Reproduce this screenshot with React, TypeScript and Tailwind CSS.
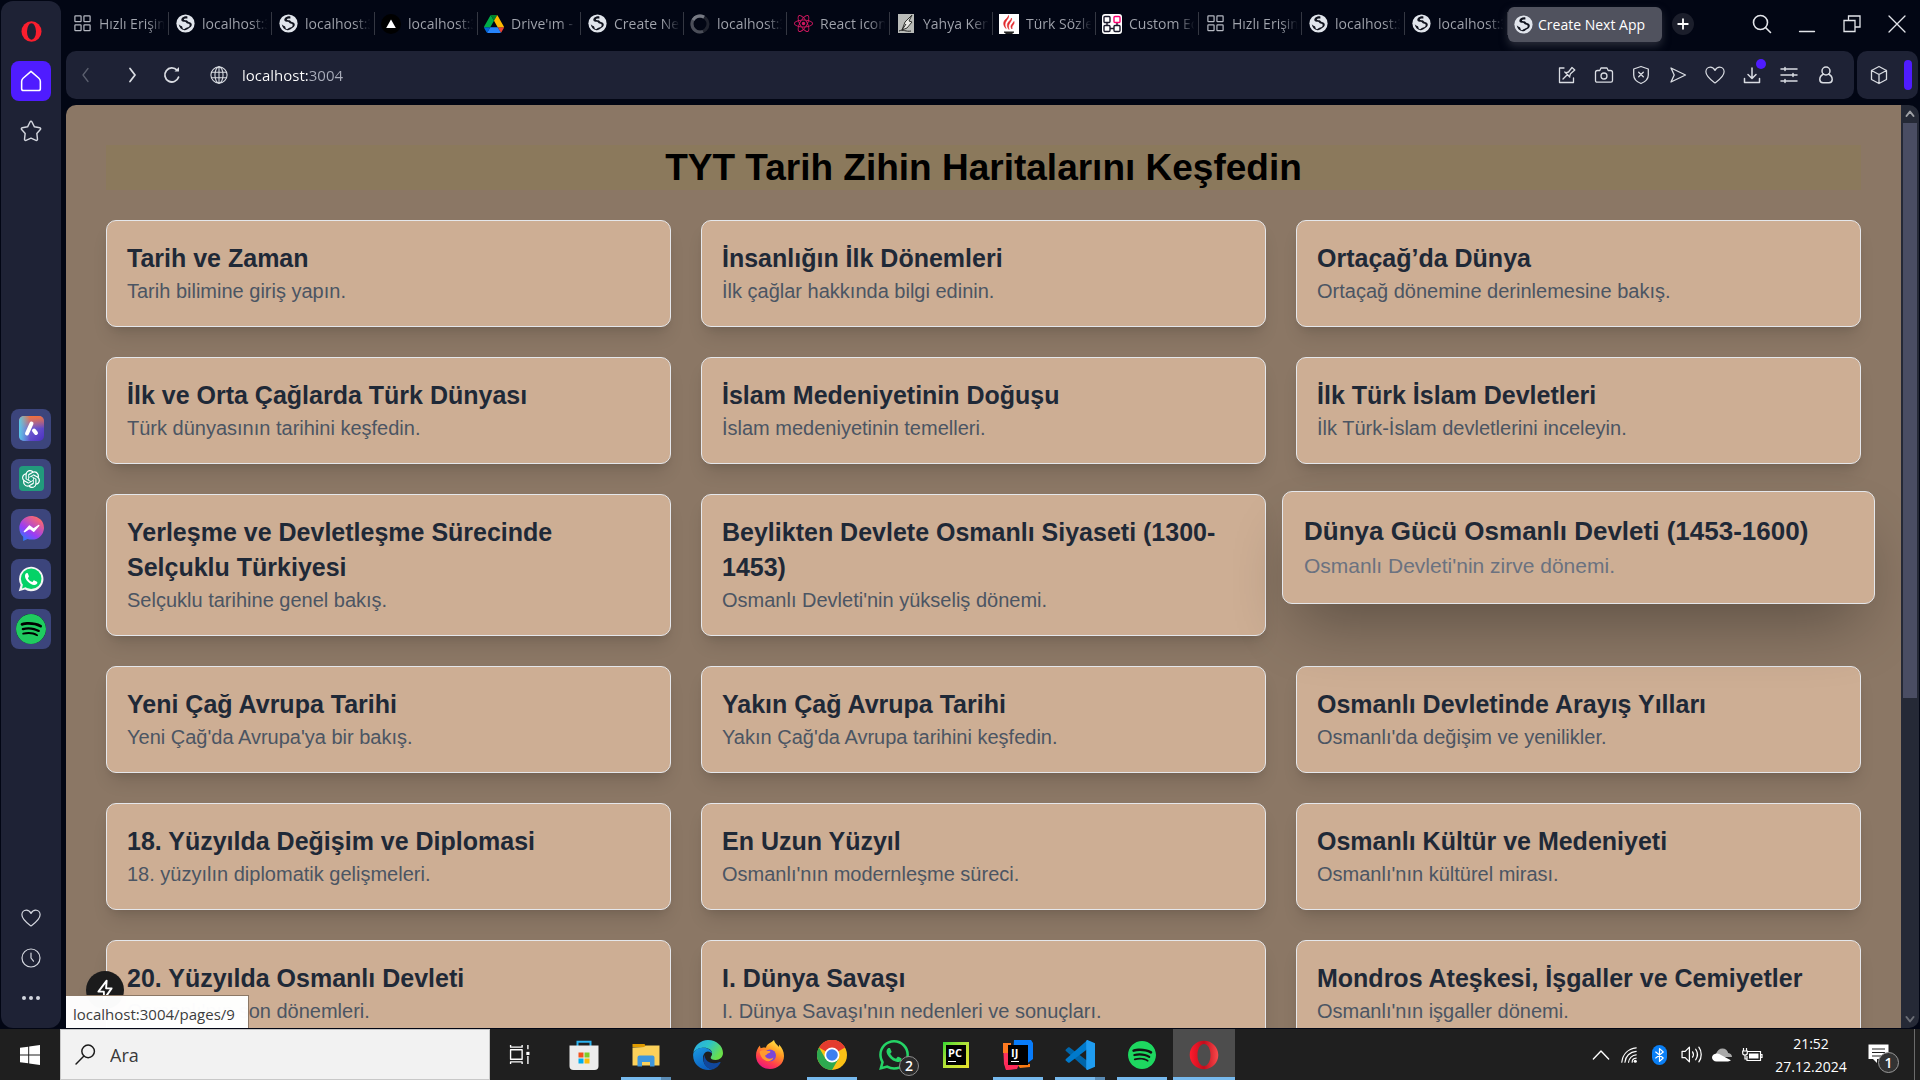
import React from "react";
import type { ReactNode } from "react";
import { SiOpenai, SiWhatsapp, SiSpotify, SiReact } from "react-icons/si";

type Kind = "grid" | "globe" | "vercel" | "drive" | "spinner" | "react" | "pen" | "flame" | "custom";

const tabs: { icon: Kind; title: string }[] = [
  { icon: "grid", title: "Hızlı Erişim" },
  { icon: "globe", title: "localhost:3000" },
  { icon: "globe", title: "localhost:3000" },
  { icon: "vercel", title: "localhost:3000" },
  { icon: "drive", title: "Drive'ım - Google" },
  { icon: "globe", title: "Create Next App" },
  { icon: "spinner", title: "localhost:3000" },
  { icon: "react", title: "React icons" },
  { icon: "pen", title: "Yahya Kemal" },
  { icon: "flame", title: "Türk Sözleri" },
  { icon: "custom", title: "Custom Edges" },
  { icon: "grid", title: "Hızlı Erişim" },
  { icon: "globe", title: "localhost:3004" },
  { icon: "globe", title: "localhost:3004" },
];

const cards: { title: string; text: string; hovered?: boolean }[] = [
  { title: "Tarih ve Zaman", text: "Tarih bilimine giriş yapın." },
  { title: "İnsanlığın İlk Dönemleri", text: "İlk çağlar hakkında bilgi edinin." },
  { title: "Ortaçağ’da Dünya", text: "Ortaçağ dönemine derinlemesine bakış." },
  { title: "İlk ve Orta Çağlarda Türk Dünyası", text: "Türk dünyasının tarihini keşfedin." },
  { title: "İslam Medeniyetinin Doğuşu", text: "İslam medeniyetinin temelleri." },
  { title: "İlk Türk İslam Devletleri", text: "İlk Türk-İslam devletlerini inceleyin." },
  { title: "Yerleşme ve Devletleşme Sürecinde Selçuklu Türkiyesi", text: "Selçuklu tarihine genel bakış." },
  { title: "Beylikten Devlete Osmanlı Siyaseti (1300-1453)", text: "Osmanlı Devleti'nin yükseliş dönemi." },
  { title: "Dünya Gücü Osmanlı Devleti (1453-1600)", text: "Osmanlı Devleti'nin zirve dönemi.", hovered: true },
  { title: "Yeni Çağ Avrupa Tarihi", text: "Yeni Çağ'da Avrupa'ya bir bakış." },
  { title: "Yakın Çağ Avrupa Tarihi", text: "Yakın Çağ'da Avrupa tarihini keşfedin." },
  { title: "Osmanlı Devletinde Arayış Yılları", text: "Osmanlı'da değişim ve yenilikler." },
  { title: "18. Yüzyılda Değişim ve Diplomasi", text: "18. yüzyılın diplomatik gelişmeleri." },
  { title: "En Uzun Yüzyıl", text: "Osmanlı'nın modernleşme süreci." },
  { title: "Osmanlı Kültür ve Medeniyeti", text: "Osmanlı'nın kültürel mirası." },
  { title: "20. Yüzyılda Osmanlı Devleti", text: "Osmanlı'nın son dönemleri." },
  { title: "I. Dünya Savaşı", text: "I. Dünya Savaşı'nın nedenleri ve sonuçları." },
  { title: "Mondros Ateşkesi, İşgaller ve Cemiyetler", text: "Osmanlı'nın işgaller dönemi." },
];

function Line({ size = 20, width = 1.3, className = "", children }: { size?: number; width?: number; className?: string; children: ReactNode }) {
  return (
    <svg width={size} height={size} viewBox="0 0 20 20" fill="none" stroke="currentColor" strokeWidth={width} strokeLinecap="round" strokeLinejoin="round" className={className} aria-hidden="true">
      {children}
    </svg>
  );
}

function Globe() {
  return (
    <svg width="19" height="19" viewBox="0 0 20 20" className="shrink-0" aria-hidden="true">
      <circle cx="10" cy="10" r="9.6" fill="#e1e5ec" />
      <path d="M12 2.500C8.500 2 5.500 4 5.600 6.300c.1 1.700 2.200 1.600 3.900 1.900 1.500.3 1.200 1.800 2.600 1.900 1.600.2 2.400.6 2.300 2-.1 1.700-2.600 2-3.900 2.600-1 .5-1.500 1.600-2.800 1.200-1.200-.4-.6-2-1.500-2.900-.8-.8-2.600-.9-3.300-2.500.3 3.400 2.700 6 6 6.700 1.900.2 3.200-1.200 4.600-2.100 1.700-1 3.200-2 3.100-4 0-1.700-1.700-2.300-3.200-2.700-1.200-.3-1.200-1.500-2.500-1.800-1-.2-2.300.3-2.600-.7-.3-1.200 2.100-1.300 3.700-1.200z" fill="#11141f" />
    </svg>
  );
}

function TabIcon({ kind }: { kind: Kind }) {
  switch (kind) {
    case "grid":
      return (
        <Line size={19} width={1.3} className="text-[#b4b7c0]">
          <rect x="2" y="2" width="6.500" height="6" rx=".6" />
          <rect x="11.500" y="2" width="6.500" height="6" rx=".6" />
          <rect x="2" y="11.500" width="6.500" height="6" rx=".6" />
          <rect x="11.500" y="11.500" width="6.500" height="6" rx=".6" />
        </Line>
      );
    case "globe":
      return <Globe />;
    case "vercel":
      return (
        <svg width="20" height="20" viewBox="0 0 20 20" aria-hidden="true">
          <circle cx="10" cy="10" r="10" fill="#000" />
          <path d="M10 5.500 14.800 14H5.200z" fill="#fff" />
        </svg>
      );
    case "drive":
      return (
        <svg width="20" height="18" viewBox="0 0 87.300 78" aria-hidden="true">
          <path d="m6.600 66.850 3.850 6.650c.8 1.400 1.950 2.500 3.300 3.300L27.500 53H0c0 1.550.4 3.100 1.200 4.500z" fill="#0066da" />
          <path d="M43.650 25 29.900 1.200c-1.350.8-2.500 1.900-3.300 3.300l-25.400 44A9 9 0 0 0 0 53h27.500z" fill="#00ac47" />
          <path d="M73.550 76.800c1.350-.8 2.500-1.900 3.300-3.300l1.600-2.750L86.100 57.500c.8-1.400 1.200-2.950 1.200-4.500H59.800l5.850 11.500z" fill="#ea4335" />
          <path d="M43.650 25 57.400 1.200C56.050.4 54.500 0 52.900 0H34.400c-1.600 0-3.150.45-4.500 1.200z" fill="#00832d" />
          <path d="M59.800 53H27.500L13.750 76.800c1.350.8 2.900 1.200 4.500 1.200h50.800c1.600 0 3.150-.45 4.500-1.200z" fill="#2684fc" />
          <path d="m73.400 26.500-12.700-22c-.8-1.400-1.950-2.500-3.300-3.300L43.650 25 59.800 53h27.450c0-1.550-.4-3.100-1.200-4.500z" fill="#ffba00" />
        </svg>
      );
    case "spinner":
      return (
        <svg width="20" height="20" viewBox="0 0 20 20" fill="none" strokeWidth="3" aria-hidden="true">
          <circle cx="10" cy="10" r="8" stroke="#20232e" />
          <path d="M14 3.100A8 8 0 1 0 13 17.400" stroke="#4b4e59" />
          <path d="M14 3.100A8 8 0 0 0 3 6" stroke="#777a84" />
        </svg>
      );
    case "react":
      return <SiReact size={19} className="text-[#d0175f]" />;
    case "pen":
      return (
        <svg width="16" height="19" viewBox="0 0 16 19" aria-hidden="true">
          <path d="M0 0h16v19H0z" fill="#b9bbb8" />
          <path d="M14 1 7 8l-3 8 5-2 5-6-3-1z" fill="#e8e8e4" stroke="#31332f" strokeWidth="1" />
          <path d="m4 16 4-6M1 17c4-2 7 1 12 0" stroke="#222" fill="none" />
        </svg>
      );
    case "flame":
      return (
        <svg width="20" height="20" viewBox="0 0 20 20" aria-hidden="true">
          <path d="M0 0h20v20H0z" fill="#fff" />
          <path d="M9.500 1.500c1 4-6 6-2.500 13C3.500 10.500 4.500 7.500 6.500 5.500c1.200-1.200 2.500-2 3-4zM12.500 4c1 4-4.500 5-2.500 11.500-3-4-1.500-6.500.5-8.500 1-1 1.500-1.500 2-3zM15 7.500c1 3-3 4-2 7.500-2.500-3 0-4.500 2-7.500z" fill="#e2282c" stroke="#e2282c" strokeWidth=".6" />
          <path d="M5 17.500h10v1l-2 1.500H7l-2-1.500z" fill="#222" />
        </svg>
      );
    case "custom":
      return (
        <svg width="20" height="20" viewBox="0 0 20 20" aria-hidden="true">
          <rect width="20" height="20" rx="3" fill="#fff" />
          <g fill="none" stroke="#1a192b" strokeWidth="1.400">
            <rect x="2" y="2.500" width="6" height="6" rx="1" />
            <rect x="2" y="11.500" width="6" height="6" rx="1" />
            <rect x="12" y="11.500" width="6" height="6" rx="1" />
            <path d="M8 14.500h4M5 8.500v3M15 8.500v3" />
            <rect x="12" y="2.500" width="6" height="6" rx="1" stroke="#ff0072" />
          </g>
        </svg>
      );
  }
}

function Heart({ size = 20 }: { size?: number }) {
  return (
    <Line size={size} width={1.2}>
      <path d="M10 18C6 15 .9 11.500.9 6.800.9 4.200 2.900 2.200 5.300 2.200c2 0 3.700 1.100 4.700 3.200 1-2.100 2.700-3.200 4.700-3.200 2.400 0 4.400 2 4.400 4.600C19.100 11.500 14 15 10 18z" />
    </Line>
  );
}

const pageTools: { label: string; icon: ReactNode; dot?: boolean }[] = [
  { label: "Düzenle", icon: <Line><path d="M7 3H2.500v14.500h14V13M6 14l4.500-4.500M7.800 7l5 5M8.500 7.800l3-.8L15 2.500 17.800 5 13.500 8.800l-1 3" /></Line> },
  { label: "Anlık görüntü", icon: <Line><path d="M1.500 7.500c0-1.200.8-2 2-2h2.300L7 3h6l1.200 2.500h2.300c1.200 0 2 .8 2 2v8c0 1-.6 1.600-1.600 1.600H3.100c-1 0-1.600-.6-1.600-1.600z" /><circle cx="10" cy="11" r="3" /></Line> },
  { label: "Reklam engelleyici", icon: <Line><path d="M10 1.500 17.300 4v6c0 4-3 6.800-7.300 8.500C5.700 16.800 2.700 14 2.700 10V4zM7.700 7.200l4.600 4.600M12.300 7.200l-4.600 4.600" /></Line> },
  { label: "Gönder", icon: <Line><path d="M3 3l14.500 7L3 17l3.200-7z" /></Line> },
  { label: "Favori", icon: <Heart /> },
  { label: "İndirilenler", dot: true, icon: <Line width={1.500}><path d="M10 3v10M6 9.500l4 4 4-4M2.500 13.500v4h15v-4" /></Line> },
  { label: "Ayarlar", icon: <Line width={1.500}><path d="M2 4h16M2 10h16M2 16h16M6 2.500v3M14 8.500v3M6 14.500v3" /></Line> },
  { label: "Profil", icon: <Line width={1.500}><circle cx="10" cy="6" r="4" /><path d="M7.500 9C5 10.200 3.800 12.300 3.800 14.500c0 2 1.200 3.200 3.200 3.200h6c2 0 3.200-1.200 3.200-3.200 0-2.200-1.200-4.300-3.700-5.500" /></Line> },
];

function AriaIcon() {
  return (
    <svg width="25" height="25" viewBox="0 0 25 25" aria-hidden="true">
      <defs>
        <linearGradient id="aria" x1="0" y1="0" x2="1" y2="1">
          <stop offset="0" stopColor="#c9799d" />
          <stop offset=".5" stopColor="#6f5bd0" />
          <stop offset="1" stopColor="#4a2fc0" />
        </linearGradient>
        <linearGradient id="ariaTop" x1="0" y1="0" x2="0" y2="1">
          <stop offset="0" stopColor="#f2703a" />
          <stop offset=".5" stopColor="#f2703a" stopOpacity="0" />
        </linearGradient>
        <linearGradient id="ariaLeft" x1="0" y1="0" x2="1" y2="0">
          <stop offset="0" stopColor="#58c8e8" />
          <stop offset=".45" stopColor="#58c8e8" stopOpacity="0" />
        </linearGradient>
      </defs>
      <rect width="25" height="25" rx="5" fill="url(#aria)" />
      <rect width="25" height="25" rx="5" fill="url(#ariaTop)" />
      <rect width="25" height="25" rx="5" fill="url(#ariaLeft)" />
      <path d="m8 17.500 4.500-10" stroke="#fff" strokeWidth="4" strokeLinecap="round" />
      <path d="m15 14.500 2 2.500" stroke="#fff" strokeWidth="4" strokeLinecap="round" />
    </svg>
  );
}

function MessengerIcon() {
  return (
    <svg width="25" height="25" viewBox="0 0 25 25" aria-hidden="true">
      <defs>
        <linearGradient id="msgr" x1="0" y1="1" x2=".7" y2="0">
          <stop offset="0" stopColor="#0a8dff" />
          <stop offset=".45" stopColor="#9a3cf5" />
          <stop offset="1" stopColor="#ff6a68" />
        </linearGradient>
      </defs>
      <path d="M12.500 0A12 12 0 0 0 .3 12c0 3.600 1.500 6.600 3.900 8.800V25l4.300-2c1.300.400 2.700.600 4 .600A12 12 0 0 0 25 12 12 12 0 0 0 12.500 0z" fill="url(#msgr)" />
      <path d="m5.500 15.500 5-5.500 4 3 5.200-3.500-5 5.700-4-3z" fill="#fff" stroke="#fff" strokeWidth="1.500" strokeLinejoin="round" />
    </svg>
  );
}

function WhatsappBubble() {
  return (
    <svg width="26" height="26" viewBox="0 0 26 26" aria-hidden="true">
      <path d="M.7 25.300 2.600 19A12.200 12.200 0 1 1 7 23.500z" fill="#f3f5f4" />
      <circle cx="13.200" cy="12.800" r="10.300" fill="#05d267" />
      <path d="M4 22.500 5.300 17l3.500 3.700z" fill="#05d267" />
      <path d="M9 7c-.9 0-2 1.200-2 3 0 3.700 5 8.900 9.200 8.900 1.700 0 3.200-1 3.200-2.400 0-.6-.2-.8-3-2.100-.5-.2-.7 0-1.700 1.300-.3.3-.6.300-1 .1-1.800-.9-2.900-2-3.700-3.400-.3-.5.900-1.300.9-2 0-.4-.9-2.600-1.200-3.100-.2-.3-.4-.3-.7-.3z" fill="#fff" />
    </svg>
  );
}

const sideApps: { label: string; icon: ReactNode }[] = [
  { label: "Aria", icon: <AriaIcon /> },
  { label: "ChatGPT", icon: <span className="flex size-[25px] items-center justify-center rounded-sm bg-[#229a7c]"><SiOpenai size={18} className="text-white" /></span> },
  { label: "Messenger", icon: <MessengerIcon /> },
  { label: "WhatsApp", icon: <WhatsappBubble /> },
  { label: "Spotify", icon: <span className="flex size-[30px] items-center justify-center rounded-full bg-black"><SiSpotify size={30} className="text-[#1fcb60]" /></span> },
];

function SideBar() {
  return (
    <nav aria-label="Kenar çubuğu" className="mx-px mt-px flex w-[60px] shrink-0 flex-col items-center rounded-xl bg-[#1e2235] text-[#d3d6de]">
      <button aria-label="Opera" className="mt-4 flex h-7 w-10 items-center justify-center">
        <svg width="21" height="21" viewBox="0 0 21 21" aria-hidden="true">
          <ellipse cx="10.500" cy="10.500" rx="10" ry="10.300" fill="#fa1e2e" />
          <ellipse cx="10.500" cy="10.500" rx="4.500" ry="8.300" fill="#1e2235" />
        </svg>
      </button>
      <button aria-label="Ana sayfa" className="mt-4 flex size-10 items-center justify-center rounded-lg bg-[#4f1cff] text-white">
        <Line size={22} width={1.400}><path d="M10 1.200 2.800 7.500c-.8.700-1.300 1.800-1.300 2.900V17c0 1 .7 1.700 1.700 1.700h13.600c1 0 1.700-.7 1.700-1.700v-6.600c0-1.100-.5-2.200-1.300-2.900z" /></Line>
      </button>
      <button aria-label="Yer imleri" className="mt-[18px] flex size-6 items-center justify-center">
        <Line size={22} width={1.300}><path d="M10 1.200c.4 0 .7.2.9.600l2.200 4.400 4.900.9c.8.200 1.100 1 .5 1.600l-3.200 3.500.6 5.300c0 .8-.7 1.300-1.400 1l-4.500-2-4.500 2c-.7.300-1.400-.2-1.400-1l.6-5.300-3.200-3.500c-.6-.6-.3-1.400.5-1.600l4.900-.9 2.200-4.400c.2-.4.500-.6.900-.6z" /></Line>
      </button>
      <div className="flex flex-1 flex-col items-center justify-center gap-2.5 pt-1.5">
        {sideApps.map((a) => (
          <button key={a.label} aria-label={a.label} className="flex size-10 items-center justify-center rounded-lg bg-[#3c457c]">
            {a.icon}
          </button>
        ))}
      </div>
      <div className="flex flex-col items-center gap-5 pb-5">
        <button aria-label="Favoriler"><Heart /></button>
        <button aria-label="Geçmiş"><Line width={1.200}><circle cx="10" cy="10" r="9" /><path d="M10 5v5l2.500 3.200" /></Line></button>
        <button aria-label="Diğer"><Line><g fill="currentColor" stroke="none"><circle cx="3" cy="10" r="2" /><circle cx="10" cy="10" r="2" /><circle cx="17" cy="10" r="2" /></g></Line></button>
      </div>
    </nav>
  );
}

function TabBar() {
  return (
    <header className="flex h-[51px] items-start pr-1">
      <div role="tablist" className="flex min-w-0">
        {tabs.map((t, i) => (
          <button role="tab" key={i} className="mt-3 flex h-[23px] w-[103px] min-w-0 items-center gap-[7px] border-r border-[#343742] pl-1.5 pr-1">
            <span className="flex w-5 shrink-0 justify-center"><TabIcon kind={t.icon} /></span>
            <span className="flex-1 overflow-hidden whitespace-nowrap bg-linear-to-r from-[#a2a5ae] from-75% to-[#a2a5ae]/5 to-100% bg-clip-text text-left text-sm text-transparent">{t.title}</span>
          </button>
        ))}
        <button role="tab" aria-selected="true" className="mt-[7px] flex h-[35px] w-[154px] shrink-0 items-center gap-[5px] rounded-md bg-[#50525e] pl-1.5 text-sm text-white shadow-[0_4px_8px_#50525e80]">
          <Globe />
          <span className="whitespace-nowrap">Create Next App</span>
        </button>
      </div>
      <button aria-label="Yeni sekme" className="ml-[10px] mt-[13px] flex size-[22px] shrink-0 items-center justify-center rounded-full bg-[#1b1e2b] text-white">
        <Line size={12} width={3}><path d="M10 2v16M2 10h16" /></Line>
      </button>
      <div className="ml-auto mt-3.5 flex items-center gap-[25px] pr-2 text-[#e3e5ea]">
        <button aria-label="Sekmelerde ara"><Line width={1.600}><circle cx="8.500" cy="8.500" r="7" /><path d="m13.500 13.500 5 5" /></Line></button>
        <button aria-label="Küçült"><Line><path d="M2.500 17.500h15" /></Line></button>
        <button aria-label="Geri yükle"><Line><path d="M2 6.500h11v11H2zM6.500 6.500V2H18v11h-5" strokeLinejoin="miter" /></Line></button>
        <button aria-label="Kapat"><Line><path d="m2 2 16 16M18 2 2 18" /></Line></button>
      </div>
    </header>
  );
}

function AddressBar() {
  return (
    <div className="flex h-12 gap-[3px] pr-px text-[#d9dce2]">
      <form className="flex flex-1 items-center rounded-[10px] bg-[#1e2235] pl-2.5 pr-[18px]">
        <button type="button" aria-label="Geri" className="text-[#5b5f6e]"><Line><path d="m12 3.500-5 6.500 5 6.500" /></Line></button>
        <button type="button" aria-label="İleri" className="ml-[26px]"><Line width={1.800}><path d="m8 3.500 5 6.500-5 6.500" /></Line></button>
        <button type="button" aria-label="Yenile" className="ml-5"><Line width={1.800}><path d="M16.500 12.200A7 7 0 1 1 15 5.200" /><path d="M12.500 6.500h4.500V2z" fill="currentColor" stroke="none" /></Line></button>
        <span className="ml-7"><Line size={18} width={1.200}><circle cx="10" cy="10" r="9" /><ellipse cx="10" cy="10" rx="4.500" ry="9" /><path d="M10 1v18M1.700 7h16.600M1.700 13h16.600" /></Line></span>
        <label className="ml-[14px] flex min-w-0 flex-1 text-[15px]">
          <span className="sr-only">Adres</span>
          <input defaultValue="localhost:3004" className="w-full bg-transparent bg-linear-to-r from-white from-[67px] to-[#a9adba] to-[67px] bg-clip-text text-transparent outline-none" />
        </label>
        <div className="flex items-center gap-[17px]">
          {pageTools.map((t) => (
            <button type="button" key={t.label} aria-label={t.label} className="relative">
              {t.icon}
              {t.dot && <span className="absolute -right-1 -top-1.5 size-2.5 rounded-full bg-[#4f1cff]" />}
            </button>
          ))}
        </div>
      </form>
      <div className="flex w-[61px] items-center justify-between rounded-[10px] bg-[#1e2235] pl-3 pr-1.5">
        <button aria-label="Uzantılar"><Line><path d="M10 1.500 17.500 5.500v9L10 18.500l-7.500-4v-9zM2.500 5.500 10 9.500l7.500-4M10 9.500v9" /></Line></button>
        <span className="h-[30px] w-2 rounded-full bg-[#4f1cff]" />
      </div>
    </div>
  );
}

function Card({ title, text, hovered }: { title: string; text: string; hovered?: boolean }) {
  if (hovered) {
    return (
      <a href="#9" className="relative z-10 -mx-[14px] -mt-[3px] block self-start rounded-[10px] border border-gray-200 bg-[#cdae94] p-[21px] shadow-[0_32px_64px_-15px_rgb(0_0_0/0.33)]">
        <h2 className="text-[26px]/[37px] font-bold text-[#1f2937]">{title}</h2>
        <p className="text-[21px]/[32px] text-[#6b7280]">{text}</p>
      </a>
    );
  }
  return (
    <a href="#harita" className="block rounded-[10px] border border-gray-200 bg-[#cdae94] p-5 shadow-[0_12px_18px_-4px_rgb(0_0_0/0.12),0_5px_8px_-5px_rgb(0_0_0/0.12)]">
      <h2 className="text-[25px]/[35px] font-bold text-[#1f2937]">{title}</h2>
      <p className="text-xl/[30px] text-[#4b5563]">{text}</p>
    </a>
  );
}

function Page() {
  return (
    <div className="relative mt-1.5 flex min-h-0 flex-1">
      <main className="min-w-0 flex-1 overflow-hidden rounded-tl-[10px] bg-[#8b7765] p-10 font-['Liberation_Sans',Arial,sans-serif]">
        <h1 className="mb-[30px] bg-[#8b795c] text-center text-[37px]/[45px] font-bold text-black">TYT Tarih Zihin Haritalarını Keşfedin</h1>
        <div className="grid grid-cols-3 gap-[30px]">
          {cards.map((c) => <Card key={c.title} {...c} />)}
        </div>
      </main>
      <div className="flex w-[18px] flex-col items-center rounded-r-[10px] bg-[#252936] text-[#9fa1a6]">
        <span className="flex h-[18px] items-center"><Line size={10} width={4}><path d="m3 14 7-9 7 9" /></Line></span>
        <span className="h-[575px] w-3.5 bg-[#4a4d63]" />
        <span className="mt-auto flex h-[18px] items-center text-[#6b6e76]"><Line size={10} width={4}><path d="m3 6 7 9 7-9" /></Line></span>
      </div>
      <button aria-label="Geliştirici göstergesi" className="absolute bottom-[19px] left-5 flex size-[38px] items-center justify-center rounded-full bg-[#1b1b1c] text-white shadow-lg">
        <Line size={22} width={1.700}><path d="M11.500 1.500 4 11.500h5v7l7-10h-5z" /></Line>
      </button>
      <div className="absolute bottom-0 left-0 z-10 flex h-[33px] w-[183px] items-center whitespace-nowrap border-r border-t border-[#8b7765] bg-white/98 pl-[7px] pt-1 text-[15px] text-[#3c3c3c]">localhost:3004/pages/9</div>
    </div>
  );
}

function WhatsappTask() {
  return (
    <span className="relative">
      <SiWhatsapp size={30} className="text-[#25d366]" />
      <span className="absolute -bottom-1.5 -right-2.5 flex size-5 items-center justify-center rounded-full border border-[#8d8d8d] bg-[#2b2b2b] text-sm font-semibold text-white">2</span>
    </span>
  );
}

const taskApps: { label: string; icon: ReactNode; state?: "running" | "stacked" | "active" }[] = [
  {
    label: "Microsoft Store",
    icon: (
      <svg width="30" height="30" viewBox="0 0 30 30" aria-hidden="true">
        <path d="M8.500 6V1.800h13V6" fill="none" stroke="#2bb3f0" strokeWidth="2" />
        <path d="M.5 5.500h29V26a4 4 0 0 1-4 4h-21a4 4 0 0 1-4-4z" fill="#ececec" />
        <path d="M9.500 12.500h5v5h-5z" fill="#f1511b" />
        <path d="M15.500 12.500h5v5h-5z" fill="#80cc28" />
        <path d="M9.500 18.500h5v5h-5z" fill="#00adef" />
        <path d="M15.500 18.500h5v5h-5z" fill="#fbbc09" />
      </svg>
    ),
  },
  {
    label: "Dosya Gezgini",
    state: "stacked",
    icon: (
      <svg width="28" height="28" viewBox="0 0 28 28" aria-hidden="true">
        <path d="M.5 3h12l2 3h-14z" fill="#e09b00" />
        <path d="M.5 6.500 12 6l2-1.500h13.500v20H.5z" fill="#fcd15a" />
        <path d="M5.500 25.500v-9a2 2 0 0 1 2-2h13a2 2 0 0 1 2 2v9h-4.500V21h-8v4.500z" fill="#3e97dd" />
      </svg>
    ),
  },
  {
    label: "Microsoft Edge",
    icon: (
      <svg width="30" height="30" viewBox="0 0 30 30" aria-hidden="true">
        <defs>
          <linearGradient id="edgeA" x1="0" y1="0" x2="1" y2=".5"><stop offset="0" stopColor="#2aa7e8" /><stop offset=".5" stopColor="#2cc3c9" /><stop offset="1" stopColor="#6adf4a" /></linearGradient>
          <linearGradient id="edgeB" x1="0" y1="0" x2=".5" y2="1"><stop offset="0" stopColor="#1a9be2" /><stop offset="1" stopColor="#0c5fc0" /></linearGradient>
        </defs>
        <path d="M.3 13C1.300 5.500 7.500 0 15 0c8.500 0 15 6 15 13 0 4-3.200 7-7.300 7-3.500 0-5-1.200-5-2.500 0-1 1.400-1.500 1.400-4C19 10 15.500 7.800 11 7.800 6 7.800 2 10 .3 13z" fill="url(#edgeA)" />
        <path d="M.1 15C.3 10.500 5 7.800 10.500 7.800c4.700 0 8.200 2.500 8.500 5.700-1-1.300-2.500-2-4-2-3 0-5 3-5 6.500 0 6 4.500 11 10 11.200C11 32 0 26 .1 15z" fill="url(#edgeB)" />
        <path d="M11.500 15c-3.500 7 2 14.500 9 14.200 3-1.300 5.500-3.500 7-6.500.3-.6-.3-1-.9-.7C20 25 12 22.500 11.500 15z" fill="#10479c" />
      </svg>
    ),
  },
  {
    label: "Firefox",
    icon: (
      <svg width="30" height="30" viewBox="0 0 30 30" aria-hidden="true">
        <defs>
          <linearGradient id="fox" x1=".8" y1="0" x2=".3" y2="1"><stop offset="0" stopColor="#fff04a" /><stop offset=".4" stopColor="#ff9722" /><stop offset=".75" stopColor="#ff3b4e" /><stop offset="1" stopColor="#e7157f" /></linearGradient>
        </defs>
        <path d="M19 0c.5 3 3 4.500 5 7 .2-1 0-2 0-2.500 3 3 5 7 5 11.500C29 23.500 22.800 29 15 29S1 23.500 1 15.500c0-4 1.500-7.500 4-10 0 1 .2 2 .7 2.800C7.500 7.500 9 7.200 11 7.700 11.500 4 15 3.500 19 0z" fill="url(#fox)" />
        <circle cx="15" cy="15.500" r="6" fill="#7b46d8" />
        <path d="M4.500 11.500c4-2.500 7-.5 9.500-.5 2 0 2 1.500-1 2.500-1.500.5-1.300 2-3 2 .5 3 5 4.500 8.500 2C16 24 6 22 4.500 11.500z" fill="#ff9a2e" />
      </svg>
    ),
  },
  {
    label: "Google Chrome",
    state: "running",
    icon: (
      <svg width="30" height="30" viewBox="0 0 30 30" aria-hidden="true">
        <circle cx="15" cy="15" r="15" fill="#fbc116" />
        <path d="M15 15 2 7.500A15 15 0 0 1 28 7.500z" fill="#e33b2e" />
        <path d="M15 0a15 15 0 0 1 13 7.500H15z" fill="#e33b2e" />
        <path d="M2 7.500A15 15 0 0 0 15 30l6.500-11.200L15 15 8.500 18.800z" fill="#2da94f" />
        <circle cx="15" cy="15" r="7.500" fill="#fff" />
        <circle cx="15" cy="15" r="5.800" fill="#3d7ff0" />
      </svg>
    ),
  },
  { label: "WhatsApp", icon: <WhatsappTask /> },
  {
    label: "PyCharm",
    icon: (
      <span className="flex size-[26px] bg-linear-to-br from-[#21d733] via-[#b6e338] to-[#e8e02a] p-[3px]">
        <span className="flex flex-1 flex-col items-start bg-black pl-0.5 pt-px text-[11px]/[13px] font-bold text-white">PC<span className="mt-0.5 h-px w-2 bg-white" /></span>
      </span>
    ),
  },
  {
    label: "IntelliJ IDEA",
    state: "running",
    icon: (
      <span className="relative flex size-[30px] items-center justify-center">
        <svg width="30" height="30" viewBox="0 0 30 30" className="absolute" aria-hidden="true">
          <path d="M0 3 6 3l8 12-3 14-8 1-2-6z" fill="#fe315d" />
          <path d="M0 3h8v10H0z" fill="#ff7a21" />
          <path d="M11 0h17l2 3v16l-8 6-12-10z" fill="#087cfa" />
          <path d="M14 24h13v3l-10 1z" fill="#f97a12" />
          <path d="M2 22h15l-3 7-11 1z" fill="#fe2857" />
        </svg>
        <span className="relative flex size-5 flex-col items-start bg-black pl-[3px] pt-px text-[11px]/[13px] font-bold text-white">IJ<span className="mt-0.5 h-px w-2 bg-white" /></span>
      </span>
    ),
  },
  {
    label: "Visual Studio Code",
    state: "stacked",
    icon: (
      <svg width="30" height="30" viewBox="0 0 30 30" aria-hidden="true">
        <path d="m1 9.300 2-1.800c.5-.4 1.200-.4 1.700 0L22.500 21v9L.9 11.100c-.5-.5-.5-1.300.1-1.800z" fill="#0065a9" />
        <path d="m1 20.700 2 1.800c.5.4 1.200.4 1.700 0L22.500 9V0L.9 18.900c-.5.500-.5 1.300.1 1.800z" fill="#007acc" />
        <path d="M22.500 0 30 3.300v23.400L22.500 30c-.8.100-1.300-.4-1.300-1.200V1.200c0-.8.500-1.300 1.300-1.200z" fill="#1f9cf0" />
      </svg>
    ),
  },
  { label: "Spotify", state: "running", icon: <span className="flex rounded-full bg-[#121212]"><SiSpotify size={28} className="text-[#1ed760]" /></span> },
  {
    label: "Opera",
    state: "active",
    icon: (
      <svg width="30" height="30" viewBox="0 0 30 30" aria-hidden="true">
        <defs><linearGradient id="op" x1="0" y1="0" x2="1" y2="0"><stop offset="0" stopColor="#ff1b2d" /><stop offset=".5" stopColor="#c20d1c" /><stop offset="1" stopColor="#fa4a4c" /></linearGradient></defs>
        <path fillRule="evenodd" d="M15 .8c8 0 14.300 6.300 14.300 14.200S23 29.200 15 29.200.7 22.900.7 15 7 .8 15 .8zm0 3.200c-4 0-6.500 5-6.500 11s2.500 11 6.500 11 6.500-5 6.500-11S19 4 15 4z" fill="url(#op)" />
      </svg>
    ),
  },
];

function TaskBar() {
  return (
    <footer className="flex h-[51px] shrink-0 items-stretch bg-[#1f1f1f] text-white">
      <button aria-label="Başlat" className="flex w-[60px] items-center justify-center">
        <svg width="20" height="20" viewBox="0 0 20 20" fill="#fff" aria-hidden="true"><path d="M0 2.800 8.200 1.700v7.800H0zM9.200 1.500 20 0v9.500H9.200zM0 10.500h8.200v7.800L0 17.200zM9.200 10.500H20V20L9.200 18.500z" /></svg>
      </button>
      <label className="flex w-[430px] items-center gap-[14px] border border-[#c8c8c8] bg-[#f2f2f2] pl-[14px] text-[#1b1b1b]">
        <Line size={21} width={1.400}><circle cx="12.500" cy="7" r="6" /><path d="M8.500 11.500 1 19" /></Line>
        <span className="sr-only">Ara</span>
        <input placeholder="Ara" className="min-w-0 flex-1 bg-transparent text-lg outline-none placeholder:text-[#3a3a3a]" />
      </label>
      <button aria-label="Görev görünümü" className="flex w-[63px] items-center pl-[19px]">
        <Line size={21} width={1.300}><path d="M1.500 5.500h11v9h-11zM1.500 1v2h11V1M1.500 19v-2h11v2M18 1v4M18 11.500V19" strokeLinecap="butt" /><path d="M16.500 7.500h3v3h-3z" fill="currentColor" stroke="none" /></Line>
      </button>
      <div className="flex">
        {taskApps.map((a) => (
          <button key={a.label} aria-label={a.label} className={"relative flex w-[62px] items-center justify-center " + (a.state === "active" ? "bg-[#4d4d4d]" : "")}>
            {a.icon}
            {a.state === "active" && <span className="absolute inset-x-0 bottom-0 h-[3px] bg-[#76b9ed]" />}
            {a.state === "running" && <span className="absolute inset-x-[6px] bottom-0 h-[3px] bg-[#76b9ed]" />}
            {a.state === "stacked" && <span className="absolute inset-x-[6px] bottom-0 h-[3px] border-r-10 border-[#5a8bb4] bg-[#76b9ed]" />}
          </button>
        ))}
      </div>
      <div className="ml-auto flex items-center gap-[10px]">
        <button aria-label="Gizli simgeler"><Line size={18} width={1.500}><path d="m1.500 14.500 8.500-9 8.500 9" /></Line></button>
        <button aria-label="Ağ"><Line size={18} width={1.300}><path d="M2 18C3 9 9 3 18 2M5.500 18C6 11.500 11 6.500 18 6M9.500 18c.5-4.500 4-8 8.500-8.200M13.500 18c0-2.500 2-4.300 4.500-4.500" /><circle cx="17" cy="17" r="1.700" fill="currentColor" stroke="none" /></Line></button>
        <button aria-label="Bluetooth" className="mx-1 flex h-5 w-[15px] items-center justify-center rounded-full bg-[#0a7ff5]"><Line size={16} width={1.600}><path d="m5 6 10 8-5 4.500v-17L15 6 5 14" /></Line></button>
        <button aria-label="Ses"><Line size={21} width={1.200}><path d="M1 7h3l4-4v14l-4-4H1zM11 7.500c1 1.500 1 3.500 0 5M14 5c2 3 2 7 0 10M17 3c3 4 3 10 0 14" /></Line></button>
        <button aria-label="OneDrive"><svg width="20" height="14" viewBox="0 0 20 14" aria-hidden="true"><path d="M4 6C5 2.500 7.500.5 10.500.5c3 0 5 2 5.700 4.500C18.500 5.300 20 7 20 9H4z" fill="#a9a9a9" /><path d="M4.500 5.500c2-.2 3.500.8 4.500 1.500l9.800 5.300c-.6.700-1.500 1.200-2.800 1.200H4.500C2 13.500 0 11.800 0 9.500s2-3.800 4.500-4z" fill="#fff" /></svg></button>
        <button aria-label="Pil"><svg width="21" height="15" viewBox="0 0 21 15" fill="none" stroke="#fff" strokeWidth="1.200" aria-hidden="true"><path d="M5 4.500h13.500v9H5V9M18.500 7.500h1.500v3h-1.500M1.500 1v3M4.500 1v3M.7 4h4.600v2c0 1.500-.8 2-2.300 2S.7 7.500.7 6zM3 8v4h2" /><path d="M7 6.500h9.500v5H7z" fill="#fff" stroke="none" /></svg></button>
        <time className="ml-0.5 w-[72px] whitespace-nowrap text-center text-sm/[23px]">21:52<br />27.12.2024</time>
        <button aria-label="Bildirimler" className="relative ml-[11px] mr-[15px]">
          <svg width="21" height="21" viewBox="0 0 21 21" aria-hidden="true"><path d="M.5.500h20V15H9v4l-4-4H.500z" fill="#fff" /><path d="M4 5h13M4 8.500h13M4 12h9" stroke="#222" strokeWidth="1.200" /></svg>
          <span className="absolute -bottom-2 -right-2.5 flex size-[21px] items-center justify-center rounded-full border border-[#9a9a9a] bg-[#333] text-sm font-semibold">1</span>
        </button>
        <button aria-label="Masaüstünü göster" className="h-full w-[6px] border-l border-[#6b6b6b]" />
      </div>
    </footer>
  );
}

export default function App() {
  return (
    <div className="flex h-screen flex-col overflow-hidden bg-[#020614] font-['Open_Sans','Noto_Sans',sans-serif]">
      <div className="flex min-h-0 flex-1 gap-1 pb-px">
        <SideBar />
        <div className="flex min-w-0 flex-1 flex-col pr-px">
          <TabBar />
          <AddressBar />
          <Page />
        </div>
      </div>
      <TaskBar />
    </div>
  );
}
